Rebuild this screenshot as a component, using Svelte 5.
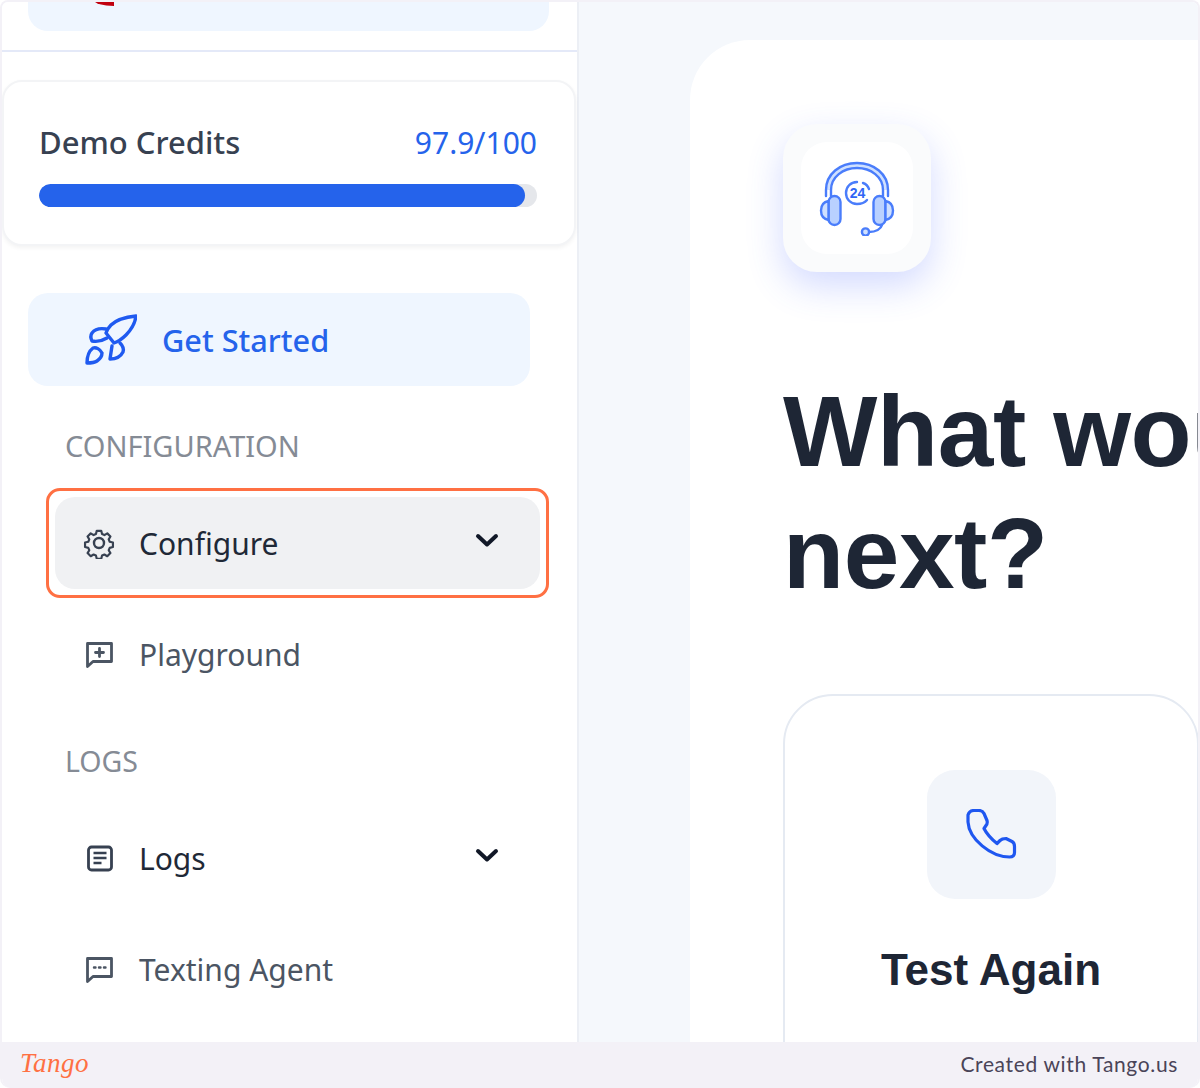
<script>
	const configItems = [
		{ label: 'Configure', icon: 'gear', active: true, caret: true },
		{ label: 'Playground', icon: 'chatPlus' }
	];
	const logItems = [
		{ label: 'Logs', icon: 'doc', caret: true, dark: true },
		{ label: 'Texting Agent', icon: 'chatDots' }
	];
</script>

{#snippet navIcon(name)}
	<svg class="nav-icon" viewBox="0 0 32 32" fill="none" stroke="currentColor" stroke-width="2.4" stroke-linejoin="round" stroke-linecap="round">
		{#if name === 'gear'}
			<path d="M13.5 2.5h5l.9 3.6 2.6 1.1 3.2-1.9 3.5 3.5-1.900 3.200 1.100 2.600 3.600.9v5l-3.600.9-1.100 2.600 1.900 3.200-3.500 3.500-3.200-1.900-2.600 1.100-.9 3.600h-5l-.9-3.600-2.600-1.100-3.200 1.900-3.500-3.500 1.900-3.200-1.100-2.600-3.600-.9v-5l3.600-.9 1.100-2.600-1.900-3.200 3.500-3.500 3.200 1.900 2.600-1.100z" transform="translate(1.600 1.600) scale(.9)" />
			<circle cx="16" cy="16" r="5" />
		{:else if name === 'chatPlus'}
			<path d="M4.500 5.500h24v18H10l-5.500 5z" stroke-width="2.800" />
			<path d="M16.500 10.500v8M12.500 14.500h8" stroke-width="2.800" />
		{:else if name === 'doc'}
			<rect x="5.500" y="5" width="23" height="23" rx="3" stroke-width="2.800" />
			<path d="M10.500 11h13M10.500 16h13M10.500 21h8" stroke-width="2.600" stroke-linecap="butt" />
		{:else}
			<path d="M4.500 5.500h24v18H10l-5.500 5z" stroke-width="2.800" />
			<path d="M11 14.500h1.500M16 14.500h1.500M21 14.500h1.500" stroke-width="2.400" />
		{/if}
	</svg>
{/snippet}

{#snippet navRow(item)}
	<div class="nav-row" class:active={item.active} class:dark={item.dark}>
		<span class="nav-glyph">{@render navIcon(item.icon)}</span>
		<span class="nav-label">{item.label}</span>
		{#if item.caret}
			<svg class="caret" viewBox="0 0 24 16" fill="none" stroke="currentColor" stroke-width="4" stroke-linecap="round" stroke-linejoin="round">
				<path d="M3 4l9 8.500L21 4" />
			</svg>
		{/if}
		{#if item.active}
			<span class="focus-ring"></span>
		{/if}
	</div>
{/snippet}

<div class="frame">
	<div class="screen">
		<aside class="sidebar">
			<div class="org-card">
				<span class="org-mark"></span>
			</div>
			<div class="divider"></div>

			<section class="credits">
				<div class="credits-head">
					<span class="credits-title">Demo Credits</span>
					<span class="credits-value">97.9/100</span>
				</div>
				<div class="track"><div class="fill" style="width: 97.6%"></div></div>
			</section>

			<div class="get-started">
				<svg class="rocket" viewBox="0 0 52 52" fill="none" stroke="currentColor" stroke-width="3.400" stroke-linejoin="round" stroke-linecap="round">
					<path d="M51 2C42 3 32 5 26 11c-2 2-4 5-5 8l8 10c3-1 8-4 12-8C47 15 50 10 51 2z" />
					<path d="M21 15c-6-1-11 0-14 4-2 3-1 6 0 8 5 1 10 0 15-3" />
					<path d="M27 32l-2 13c6 0 11-3 13-7 1-3 0-6-3-9" />
					<path d="M2 49c0-6 2-12 6-15 3-1 7 1 9 5 0 3-2 6-5 8-3 2-7 2-10 2z" />
				</svg>
				<span>Get Started</span>
			</div>

			<h2 class="section-label config-label">CONFIGURATION</h2>
			<nav class="nav-group">
				{#each configItems as item}
					{@render navRow(item)}
				{/each}
			</nav>

			<h2 class="section-label logs-label">LOGS</h2>
			<nav class="nav-group logs-group">
				{#each logItems as item}
					{@render navRow(item)}
				{/each}
			</nav>
		</aside>

		<main class="main">
			<div class="panel">
				<div class="hero-tile">
					<div class="hero-inner">
						<svg class="headset" viewBox="0 0 76 76" fill="none" stroke="#4a7dfb" stroke-width="2.400" stroke-linejoin="round" stroke-linecap="round">
							<path d="M7 30C7 14 21 3 38 3s31 11 31 27l-5 0C64 17 52 8 38 8S12 17 12 30z" fill="#cfe0ff" stroke="none" />
							<path d="M7 36v-6C7 14 21 3 38 3s31 11 31 27v6M12 36v-6C12 17 24 8 38 8s26 9 26 22v6" />
							<rect x="9.500" y="36" width="12" height="29" rx="6" fill="#b9d1ff" />
							<path d="M9.500 41C4.500 42 2 46 2 50.500S4.500 59 9.500 60z" fill="#cfe0ff" />
							<rect x="54.500" y="36" width="12" height="29" rx="6" fill="#b9d1ff" />
							<path d="M66.500 41c5 1 7.500 5 7.500 9.500S71.500 59 66.500 60z" fill="#cfe0ff" />
							<path d="M63 65c-1 4-6 7-13 7" />
							<circle cx="46.500" cy="72" r="3.600" fill="#cfe0ff" />
							<path d="M48 40c-2.500 3-6 4-10 4-6.500 0-11-5-11-11s4.500-11 11-11" />
							<path d="M44 23c3 1 5 3 6 6" />
							<text x="38.500" y="38" text-anchor="middle" class="headset-num">24</text>
						</svg>
					</div>
				</div>

				<h1 class="headline">What would you like to do<br />next?</h1>

				<div class="action-card">
					<div class="phone-tile">
						<svg class="phone" viewBox="0 0 51 51" fill="none" stroke="#1f57f0" stroke-width="3.200" stroke-linejoin="round" stroke-linecap="round">
							<path d="M2 6C3 3 5 1.500 8 1.500h5c2 0 4 1 5 3l3 7c.5 2 0 4-1 5l-2 3c3 6 8 11 13 15l3-3c2-2 4-2 6-2l6 3c2 1 2.500 3 2.500 5v6c0 3-2 4.500-5 4.500C25 48 3 30 2 13z" />
						</svg>
					</div>
					<div class="action-title">Test Again</div>
				</div>
			</div>
		</main>
	</div>

	<footer class="tango-bar">
		<span class="tango-logo">Tango</span>
		<span class="tango-credit">Created with Tango.us</span>
	</footer>
</div>

<style>
	:global(body) {
		margin: 0;
		background: #fff;
	}

	.frame {
		width: 1200px;
		height: 1088px;
		display: flex;
		flex-direction: column;
		box-sizing: border-box;
		border: 2px solid #f3f1f7;
		border-bottom: 0;
		border-radius: 8px 8px 10px 10px;
		overflow: hidden;
		font-family: 'Noto Sans', sans-serif;
	}

	.screen {
		flex: 1;
		min-height: 0;
		display: flex;
		background: #f5f8fc;
	}

	.sidebar {
		width: 577px;
		flex: none;
		box-sizing: border-box;
		background: #fff;
		border-right: 2px solid #eceff5;
	}

	.org-card {
		position: relative;
		height: 29px;
		margin: 0 28px 0 26px;
		background: #eff6ff;
		border-radius: 0 0 20px 20px;
		overflow: hidden;
	}

	.org-mark {
		position: absolute;
		left: 66px;
		top: -2px;
		width: 20px;
		height: 6px;
		border-radius: 0 0 0 100%;
		background: #c1000f;
	}

	.divider {
		height: 2px;
		margin-top: 19px;
		background: #e4e9f8;
	}

	.credits {
		height: 166px;
		width: 574px;
		box-sizing: border-box;
		margin: 28px 0 0;
		padding: 41px 37px 0 35px;
		background: #fff;
		border: 2px solid #f3f4f6;
		border-radius: 20px;
		box-shadow: 0 2px 4px rgba(0, 0, 0, 0.05);
	}

	.credits-head {
		display: flex;
		justify-content: space-between;
		align-items: baseline;
		font-size: 30px;
		line-height: 38px;
	}

	.credits-title {
		color: #374151;
		font-size: 31px;
		font-weight: 500;
	}

	.credits-value {
		color: #2563eb;
	}

	.track {
		height: 23px;
		margin-top: 22px;
		background: #e5e7eb;
		border-radius: 12px;
		overflow: hidden;
	}

	.fill {
		height: 100%;
		background: #2563eb;
		border-radius: 12px;
	}

	.get-started {
		height: 93px;
		width: 502px;
		box-sizing: border-box;
		margin: 47px 0 0 26px;
		padding-left: 57px;
		display: flex;
		align-items: center;
		gap: 25px;
		color: #2563eb;
		background: #eff6ff;
		border-radius: 20px;
		font-size: 30.700px;
		font-weight: 500;
	}

	.rocket {
		width: 52px;
		height: 52px;
		flex: none;
		color: #1f5af0;
	}

	.section-label {
		margin: 0;
		padding-left: 63px;
		color: #858b95;
		font-size: 29px;
		font-weight: 400;
		line-height: 38px;
	}

	.config-label {
		margin-top: 41px;
	}

	.logs-label {
		margin-top: 42px;
		font-size: 28.500px;
	}

	.nav-group {
		display: flex;
		flex-direction: column;
		gap: 19px;
		margin: 32px 37px 0 53px;
	}

	.logs-group {
		margin-top: 32px;
	}

	.nav-row {
		position: relative;
		height: 92px;
		display: flex;
		align-items: center;
		padding: 0 41px 0 28px;
		border-radius: 20px;
		color: #4b5563;
		font-size: 30px;
	}

	.nav-row.active {
		background: #f0f1f3;
		color: #1f2937;
	}

	.nav-row.dark {
		color: #1f2937;
	}

	.nav-glyph {
		width: 32px;
		height: 32px;
		margin-right: 24px;
		flex: none;
	}

	.nav-row.active .nav-glyph,
	.nav-row.dark .nav-glyph {
		color: #374151;
	}

	.nav-icon {
		display: block;
		width: 32px;
		height: 32px;
	}

	.nav-label {
		flex: 1;
	}

	.caret {
		width: 24px;
		height: 16px;
		margin-top: -6px;
		color: #111827;
	}

	.focus-ring {
		position: absolute;
		inset: -9px;
		border: 3px solid #ff7043;
		border-radius: 14px;
		pointer-events: none;
	}

	.main {
		flex: 1;
		min-width: 0;
		padding: 38px 0 0 111px;
		overflow: hidden;
	}

	.panel {
		width: 640px;
		height: 1100px;
		box-sizing: border-box;
		padding: 84px 0 0 93px;
		background: #fff;
		border-radius: 60px 0 0 0;
	}

	.hero-tile {
		width: 148px;
		height: 148px;
		box-sizing: border-box;
		padding: 18px;
		border-radius: 34px;
		background: #fafbfc;
		box-shadow: 0 14px 36px rgba(70, 100, 255, 0.24);
	}

	.hero-inner {
		height: 100%;
		display: flex;
		align-items: center;
		justify-content: center;
		background: #fff;
		border-radius: 26px;
	}

	.headset {
		width: 76px;
		height: 76px;
	}

	.headset-num {
		font-family: 'Liberation Sans', sans-serif;
		font-size: 14px;
		font-weight: 700;
		fill: #2f66f5;
		stroke: none;
	}

	.headline {
		margin: 98px 0 0;
		font-family: 'Liberation Sans', sans-serif;
		font-size: 100px;
		font-weight: 700;
		line-height: 122px;
		letter-spacing: -0.4px;
		white-space: nowrap;
		color: #1e2635;
	}

	.action-card {
		width: 416px;
		height: 500px;
		box-sizing: border-box;
		margin: 80px 0 0;
		padding-top: 74px;
		display: flex;
		flex-direction: column;
		align-items: center;
		background: #fff;
		border: 2px solid #e5eaf2;
		border-radius: 50px;
	}

	.phone-tile {
		width: 129px;
		height: 129px;
		display: flex;
		align-items: center;
		justify-content: center;
		background: #f2f5fa;
		border-radius: 28px;
	}

	.phone {
		width: 51px;
		height: 51px;
	}

	.action-title {
		margin-top: 42px;
		font-family: 'Liberation Sans', sans-serif;
		font-size: 44px;
		font-weight: 700;
		line-height: 58px;
		color: #1e2635;
	}

	.tango-bar {
		position: relative;
		height: 46px;
		flex: none;
		margin: 0 -2px;
		padding: 0 22px 4px 20px;
		box-sizing: border-box;
		display: flex;
		align-items: center;
		justify-content: space-between;
		background: #f3f1f7;
	}

	.tango-logo {
		font-family: 'Liberation Serif', serif;
		font-style: italic;
		font-size: 27px;
		letter-spacing: 0.5px;
		color: #ff7043;
	}

	.tango-credit {
		font-family: Lato, sans-serif;
		font-size: 21px;
		letter-spacing: 0.65px;
		color: #4a4458;
	}
</style>
